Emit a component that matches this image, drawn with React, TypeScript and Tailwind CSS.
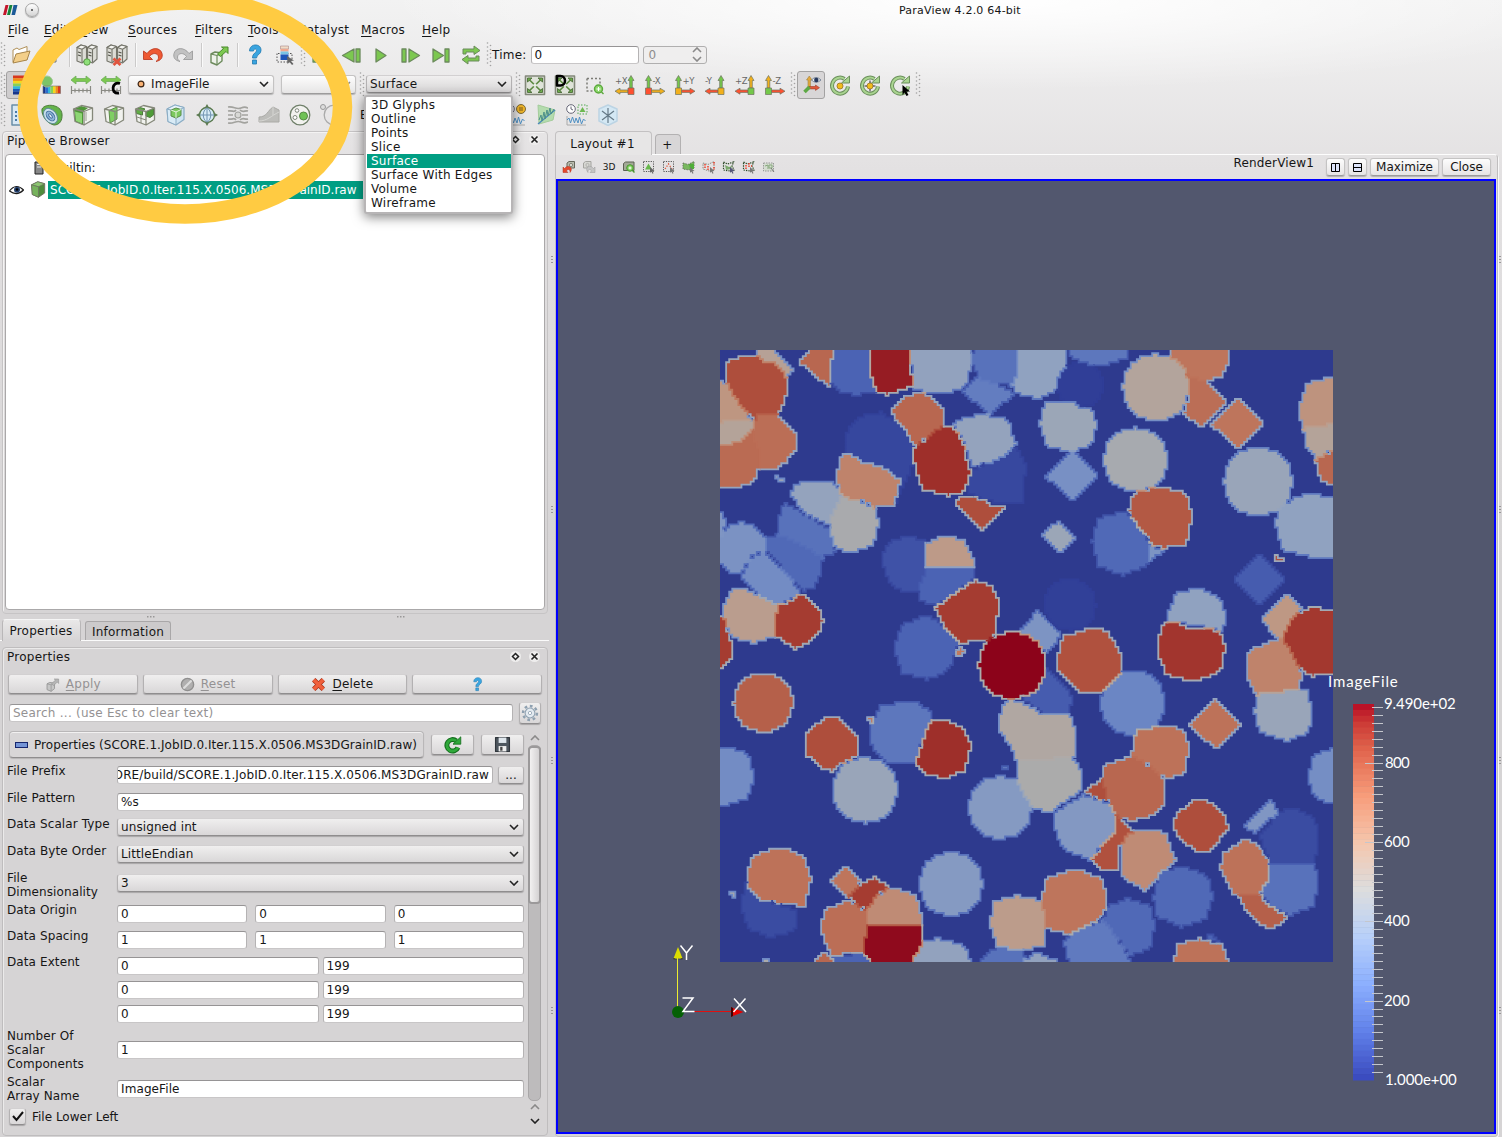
import React, { useMemo } from "react";

/* ------------------------------------------------------------------ */
/* Grain map                                                           */
/* ------------------------------------------------------------------ */

const STOPS: number[][] = [
  [0, 59, 76, 192], [0.125, 98, 130, 234], [0.25, 141, 176, 254], [0.375, 184, 208, 249], [0.5, 221, 221, 221],
  [0.625, 245, 198, 173], [0.75, 247, 156, 122], [0.875, 224, 98, 75], [0.94, 204, 60, 54], [1, 180, 4, 34],
];

function coolWarm(v: number, shade: number) {
  const t = Math.max(0, Math.min(0.9999, v));
  let i = 0;
  while (STOPS[i + 1][0] <= t) i++;
  const f = (t - STOPS[i][0]) / (STOPS[i + 1][0] - STOPS[i][0]);
  const c = [1, 2, 3].map((k) => Math.round((STOPS[i][k] * (1 - f) + STOPS[i + 1][k] * f) * shade));
  return `rgb(${c[0]},${c[1]},${c[2]})`;
}

type Grain = [number, string];

/* Grains per quadrant, painted in order; three units per screen pixel. */
const NW: Grain[] = [
  [0.035, "410,240 430,215 500,203 560,240 600,280 600,330 580,390 540,480 460,400 390,330 395,270"],
  [0.57, "125,15 180,15 235,72 210,100 150,80 120,35"],
  [0.87, "38,50 70,38 100,30 130,38 160,55 180,55 208,85 215,100 215,145 195,203 165,208 115,225 60,160 32,100"],
  [0.64, "15,103 40,120 60,155 108,225 80,230 15,235"],
  [0.56, "15,235 50,222 115,228 115,250 110,270 70,292 15,305"],
  [0.79, "15,305 70,292 115,255 130,300 132,370 120,400 100,418 50,432 15,428"],
  [0.78, "115,232 130,212 190,212 215,240 243,268 243,310 215,350 190,370 132,370 130,310 112,270"],
  [0.5, "178,398 190,388 195,398 208,402 195,415 190,408"],
  [0.8, "290,15 352,15 352,60 345,130 250,50"],
  [0.12, "352,15 465,15 470,90 485,138 425,152 370,138 346,115 350,60"],
  [0.965, "465,15 585,15 592,125 515,150 485,140 470,95"],
  [0.39, "588,15 770,15 775,60 760,90 755,120 735,135 670,147 600,135 592,120"],
  [0.17, "775,15 912,15 905,90 890,125 860,115 830,112 790,100 785,80 770,60"],
  [0.21, "740,140 785,100 830,112 900,145 825,210"],
  [0.8, "528,200 570,155 610,142 640,150 685,192 690,235 660,262 640,275 600,305 575,260 545,230"],
  [0.4, "715,240 740,220 800,207 880,225 895,280 905,300 850,345 770,368 745,290"],
  [0.94, "600,305 622,290 655,265 685,240 715,245 745,290 750,330 768,380 750,440 700,452 620,432 605,380 595,340"],
  [0.04, "768,375 850,345 905,305 932,360 925,470 860,475 800,465 755,440"],
  [0.87, "722,475 745,453 800,463 828,480 868,488 800,555"],
  [0.4, "225,450 240,420 280,408 350,410 362,420 385,455 350,510 345,545 270,505"],
  [0.71, "380,325 405,325 440,352 500,365 555,405 550,440 535,480 480,490 450,470 400,462 380,450 362,400"],
  [0.49, "350,510 380,455 440,470 480,490 492,530 475,600 400,628 360,605 345,570"],
  [0.17, "190,520 210,472 270,510 345,555 362,625 320,638 240,590 188,572"],
  [0.14, "150,580 190,570 240,590 325,640 315,690 300,730 262,740 200,670 155,615"],
  [0.32, "15,490 30,520 30,548 15,585"],
  [0.3, "15,580 40,545 80,532 115,540 155,585 150,620 115,630 75,690 50,690 15,655"],
  [0.27, "95,660 115,632 150,620 200,670 260,745 190,782 130,755 75,700"],
  [0.6, "30,770 50,738 80,730 120,750 190,785 180,875 120,895 50,880 22,805"],
  [0.91, "187,785 225,770 262,745 318,800 324,828 315,860 270,900 240,912 180,875"],
  [0.91, "15,805 30,830 45,880 50,900 48,940 15,980"],
  [0.07, "500,640 520,595 580,573 632,590 635,680 610,745 560,740 520,710"],
  [0.62, "632,600 670,578 705,575 750,590 775,640 778,672 635,672"],
  [0.12, "635,672 778,668 780,700 720,745 660,785 615,765 612,730 630,690"],
  [0.12, "540,900 560,840 635,812 665,825 730,895 710,960 690,985 635,1005 560,985 540,925"],
  [0.91, "660,790 720,745 780,705 830,725 850,770 845,855 825,885 780,892 735,895 690,850"],
  [0.75, "735,905 750,920 735,940 722,930"],
];

const NE: Grain[] = [
  [0.38, "-5,15 135,15 140,70 130,110 115,135 55,165 25,150 -5,148 -25,125 -10,90"],
  [0.19, "150,15 325,15 322,40 235,65 155,42"],
  [0.01, "c 180,120 68"],
  [0.43, "75,168 155,168 175,185 210,188 232,235 215,300 150,322 80,305 58,240"],
  [0.29, "155,315 232,393 155,470 75,393"],
  [0.43, "115,527 167,578 118,628 65,575"],
  [0.76, "455,15 628,15 622,60 600,100 560,105 515,100 485,75 480,50 455,38"],
  [0.78, "485,75 515,100 560,105 618,172 542,250 492,205 510,150"],
  [0.55, "c 408,128 99"],
  [0.76, "650,157 730,237 652,315 572,237"],
  [0.48, "c 347,345 95"],
  [0.14, "215,590 235,520 320,498 365,560 400,605 390,660 310,692 235,665"],
  [0.31, "388,605 435,612 390,655"],
  [0.84, "340,445 420,425 498,445 518,510 498,602 430,610 400,600 365,560 325,503"],
  [0.38, "820,460 870,445 940,460 940,640 870,637 785,615 768,540 770,500"],
  [0.42, "c 715,410 102"],
  [0.65, "940,95 860,115 835,200 850,250 905,245 940,232"],
  [0.56, "850,250 905,245 940,232 940,315 888,342 860,310"],
  [0.8, "940,315 888,345 890,380 910,412 940,422"],
  [0.87, "765,632 782,640 795,632 790,645 796,658 780,648 770,655"],
  [0.1, "717,628 795,707 717,785 638,707"],
  [0.014, "c 150,780 76"],
  [0.38, "445,800 470,745 535,730 600,760 618,810 608,865 575,850 440,830"],
  [0.925, "430,840 460,832 510,850 575,852 610,870 614,910 608,965 580,990 515,1012 440,990 418,940 415,880"],
  [0.63, "722,825 798,748 850,795 815,820 785,880 775,885"],
  [0.92, "850,795 880,787 940,802 940,985 880,995 845,980 815,925 785,880 815,825"],
  [0.31, "55,795 125,872 80,925 40,890 -5,865"],
  [0.1, "80,970 150,1040 155,1070 145,1105 70,1105 10,1065 20,1000"],
  [0.86, "115,930 130,875 210,852 260,858 305,930 305,985 240,1045 180,1045 115,980"],
  [1, "c -23,963 100"],
];

const SW: Grain[] = [
  [0.82, "c 145,160 88"],
  [0.87, "270,250 345,198 375,205 430,260 430,320 370,345 350,365 315,355 268,310"],
  [0.19, "465,230 500,165 600,157 650,185 645,230 620,280 600,345 520,345 470,290"],
  [0.94, "640,230 655,215 700,213 750,240 768,290 750,365 690,387 630,375 603,340 620,290"],
  [0.42, "c 450,422 97"],
  [0.27, "15,290 80,305 105,330 117,382 100,445 15,475"],
  [0.34, "c 855,475 94"],
  [0.05, "78,770 90,700 135,750 190,765 245,785 240,845 165,865 100,840"],
  [0.77, "95,680 115,620 170,600 215,600 270,625 288,690 268,772 190,762 135,750 97,712"],
  [0.5, "38,725 52,732 60,722 68,738 55,745 45,738"],
  [0.2, "850,345 866,350 880,345 870,365 860,358"],
  [0.76, "345,693 393,648 440,695 400,750"],
  [0.91, "400,745 440,700 480,685 525,712 480,745 455,785"],
  [0.78, "318,825 330,780 400,755 455,785 455,900 440,912 350,918 325,870"],
  [0.68, "455,785 480,745 525,715 600,735 618,790 618,835 455,835"],
  [0.39, "585,936 620,880 670,868 750,890 768,936"],
  [0.99, "458,832 620,832 622,885 590,936 465,936 445,910"],
  [0.12, "350,925 440,912 465,936 350,936"],
  [0.8, "300,936 335,905 352,936"],
  [0.34, "c 708,705 95"],
  [0.75, "455,210 470,203 475,218 465,220"],
  [0.5, "142,936 152,922 165,936"],
];

const SE: Grain[] = [
  [0.42, "710,135 780,125 860,120 878,190 865,250 800,275 720,250 703,190"],
  [0.71, "680,20 690,0 770,-30 785,-35 815,10 845,70 840,115 780,128 710,135 680,85"],
  [0.5, "-10,330 160,325 185,370 180,430 130,460 100,490 40,480 10,430 -8,395"],
  [0.53, "-65,220 -55,175 -30,150 0,155 60,190 148,190 165,240 162,325 -12,332 -30,290 -65,240"],
  [0.24, "c 338,160 97"],
  [0.77, "350,245 430,228 490,240 508,300 490,378 435,388 380,340 335,320 340,270"],
  [0.8, "250,350 335,320 390,350 435,390 430,470 400,500 330,515 280,495 265,455 248,400"],
  [0.87, "195,428 248,383 262,460"],
  [0.33, "100,530 105,490 190,435 265,460 288,500 285,545 210,632 130,600"],
  [0.86, "288,500 315,520 340,545 300,590 295,665 250,665 215,630 285,545"],
  [0.68, "300,600 320,555 375,540 435,550 467,632 375,724 300,680"],
  [0.87, "461,520 475,490 525,450 560,452 618,500 625,540 570,605 535,612 470,560"],
  [0.77, "587,147 665,226 590,303 508,226"],
  [0.28, "940,295 880,320 863,380 880,440 940,468"],
  [0.32, "750,455 778,485 705,555 675,530"],
  [0.05, "720,560 780,485 830,480 885,510 895,560 885,645 750,645"],
  [0.17, "750,645 885,645 897,700 880,770 810,800 750,770 720,725"],
  [0.77, "612,610 670,572 710,580 748,640 745,690 720,735 640,735 600,660"],
  [0.82, "655,740 720,732 740,765 805,808 755,838 720,828 675,780"],
  [0.14, "400,740 420,670 490,650 565,680 580,740 560,810 485,835 405,800"],
  [0.14, "265,770 320,748 390,770 405,830 390,900 330,920 250,810"],
  [0.2, "150,855 250,810 300,880 335,940 145,940 132,880"],
  [0.17, "-130,940 -65,890 10,900 20,940"],
  [0.61, "-90,830 -80,760 -10,738 65,755 75,800 70,890 0,905 -70,890"],
  [0.76, "75,690 165,658 250,690 260,770 240,810 150,855 80,840 65,760"],
  [0.77, "460,940 475,885 540,868 610,890 625,940"],
  [0.12, "570,850 610,888 560,870"],
  [0.39, "5,940 50,908 120,940"],
];

const N = 200;
const UNIT = 1839 / N;

function rasterise() {
  const cells = new Float32Array(N * N);
  const paint = (list: Grain[], ox: number, oy: number) => {
    for (const [value, shape] of list) {
      let pts: number[][];
      if (shape[0] === "c") {
        const [, centre, radius] = shape.split(" ");
        const [cx, cy] = centre.split(",").map(Number);
        const r = Number(radius);
        pts = Array.from({ length: 24 }, (_, i) => {
          const a = (i / 24) * Math.PI * 2;
          const k = i % 6 === 3 ? 1.03 : i % 6 === 0 ? 1.025 : i % 2 === 0 ? 1.03 : 0.995;
          return [cx + Math.cos(a) * r * k, cy + Math.sin(a) * r * k];
        });
      } else {
        pts = shape.split(" ").map((p) => p.split(",").map(Number));
      }
      pts = pts.map(([x, y]) => [(x + ox) / UNIT, (y + oy) / UNIT]);
      const xs = pts.map((p) => p[0]);
      const ys = pts.map((p) => p[1]);
      const x1 = Math.min(N - 1, Math.ceil(Math.max(...xs)));
      const y1 = Math.min(N - 1, Math.ceil(Math.max(...ys)));
      for (let y = Math.max(0, Math.floor(Math.min(...ys))); y <= y1; y++)
        for (let x = Math.max(0, Math.floor(Math.min(...xs))); x <= x1; x++) {
          const px = x + 0.5;
          const py = y + 0.5;
          let inside = false;
          for (let i = 0, j = pts.length - 1; i < pts.length; j = i++) {
            const [ax, ay] = pts[i];
            const [bx, by] = pts[j];
            if (ay > py !== by > py && px < ((bx - ax) * (py - ay)) / (by - ay) + ax) inside = !inside;
          }
          if (inside) cells[y * N + x] = value;
        }
    }
  };
  paint(NW, -15, -15);
  paint(SW, -15, 900);
  paint(SE, 900, 900);
  paint(NE, 900, -15);

  const fills = new Map<number, string>();
  const edges = new Map<number, string>();
  const key = (v: number) => Math.round(v * 1000) / 1000;
  const add = (m: Map<number, string>, v: number, d: string) => m.set(key(v), (m.get(key(v)) || "") + d);
  for (let y = 0; y < N; y++) {
    let start = 0;
    for (let x = 1; x <= N; x++) {
      const v = cells[y * N + start];
      if (x === N || cells[y * N + x] !== v) {
        if (v > 0) add(fills, v, `M${start} ${y}h${x - start}v1h${start - x}z`);
        if (x < N) add(edges, (v + cells[y * N + x]) / 2, `M${x} ${y}v1`);
        start = x;
      }
    }
    if (y > 0)
      for (let x = 0; x < N; x++) {
        const a = cells[y * N + x];
        const b = cells[(y - 1) * N + x];
        if (a !== b) add(edges, (a + b) / 2, `M${x} ${y}h1`);
      }
  }
  return { fills: [...fills], edges: [...edges] };
}

function GrainMap() {
  const { fills, edges } = useMemo(rasterise, []);
  return (
    <svg width="613" height="612" viewBox="0 0 200 200" preserveAspectRatio="none" className="block">
      <rect width="200" height="200" fill="#2e3a8e" />
      {fills.map(([v, d]) => (
        <path key={v} d={d} fill={coolWarm(v, 0.775)} shapeRendering="crispEdges" />
      ))}
      {edges.map(([v, d]) => (
        <path key={v} d={d} stroke={coolWarm(v, 0.78)} strokeWidth="0.6" strokeLinecap="square" />
      ))}
    </svg>
  );
}

function ScalarBar() {
  const bands = 64;
  const h = 376 / bands;
  return (
    <svg width="140" height="420" viewBox="1325 670 140 420" className="block overflow-visible font-['Lato']" fill="#fff">
      {Array.from({ length: bands }, (_, i) => (
        <rect key={i} x="1353" y={704 + i * h} width="21" height={h + 0.5} fill={coolWarm(0.985 * (1 - i / (bands - 1)), 1)} />
      ))}
      {Array.from({ length: 47 }, (_, i) => {
        const major = i === 7 || i === 17 || i === 27 || i === 37;
        return <rect key={i} x={major ? 1365 : 1372} y={Math.round(707 + i * 7.935)} width={major ? 18 : 11} height="1" fill="#c4c6cc" />;
      })}
      <text x="1328" y="687" fontSize="15" textLength="70">ImageFile</text>
      <text x="1384" y="709" fontSize="15" textLength="72">9.490e+02</text>
      <text x="1385" y="768" fontSize="15" textLength="25">800</text>
      <text x="1384" y="847" fontSize="15" textLength="26">600</text>
      <text x="1384" y="926" fontSize="15" textLength="26">400</text>
      <text x="1384" y="1006" fontSize="15" textLength="26">200</text>
      <text x="1385" y="1085" fontSize="15" textLength="72">1.000e+00</text>
    </svg>
  );
}

function Axes() {
  return (
    <svg width="80" height="80" viewBox="670 940 80 80" className="block">
      <path d="M677.5 1012V958" stroke="#ecec30" />
      <path d="M680 1011.500H731" stroke="#e01010" />
      <path d="M678 947l4.500 11.500h-9z" fill="#dcdc00" />
      <path d="M673.500 958q4.500 2.500 9 0v1.300h-9z" fill="#222200" />
      <path d="M743.500 1012l-12.500 4.800v-9.600z" fill="#e80000" />
      <path d="M731 1007v10l2-1v-8z" fill="#400" />
      <circle cx="678" cy="1012" r="6" fill="#056005" />
      <g stroke="#fff" strokeWidth="1.500" fill="none">
        <path d="M680.500 945.500l6 7.500 6-7.500M686.500 953v7" />
        <path d="M682.500 998h10.500l-10 13.500h11.500" />
        <path d="M734 998.500l12 13.500M745.500 998.500l-12 13.500" />
      </g>
    </svg>
  );
}

/* ------------------------------------------------------------------ */
/* Icons                                                               */
/* ------------------------------------------------------------------ */

type IconProps = { children: React.ReactNode; s?: number };
const Svg = ({ children, s = 22 }: IconProps) => (
  <svg width={s} height={s} viewBox="0 0 22 22" fill="none" strokeLinejoin="round" className="block shrink-0">
    {children}
  </svg>
);

const OUT = "#6d7260";
const GREEN = "#7cc850";

const Cube = ({ front = "#8ed07a", top = "#e9f2e4", side = "#5aa044", stroke = OUT }) => (
  <>
    <path d="M2 5l8-4 9 2.500v12L11 21l-8-3.500z" fill={side} stroke={stroke} strokeWidth="1.200" />
    <path d="M2 5l8-4 9 2.500-8 4z" fill={top} stroke={stroke} />
    <path d="M2 5l9 2.500V21l-8-3.500z" fill={front} stroke={stroke} />
  </>
);

const Folder = () => (
  <Svg>
    <path d="M3 18V6l4-2 2 1.500 8-3v13z" fill="#fff" stroke="#b09058" />
    <path d="M3 19L6 10l14-3-3 9z" fill="#f3cf8a" stroke="#a8864c" />
  </Svg>
);
const Disk = () => (
  <Svg><path d="M4 3h12v15H4z" fill="#ccc" stroke="#777" /><path d="M7 3h6v6H7z" fill="#eee" /></Svg>
);
const Server = ({ off = false }) => (
  <Svg>
    {[1, 11.5].map((x) => (
      <g key={x} strokeWidth="1.100">
        <path d={`M${x} 3.500l4-2.500 5.500 1.500v12.500l-4.500 4-5-2z`} fill="#dcdcd6" stroke="#74746a" />
        <path d={`M${x} 3.500l5 1.700 4.500-2.700-5.500-1.500z`} fill="#f6f6f2" stroke="#74746a" />
        <path d={`M${x + 5} 5.200v13`} stroke="#74746a" />
        <path d={`M${x + 1} 8l3 1M${x + 1} 11l3 1`} stroke="#55554c" />
      </g>
    ))}
    {off ? <path d="M7.500 14.500l7 6.500M14.500 14.500l-7 6.500" stroke="#e0553f" strokeWidth="2.800" /> : <circle cx="11" cy="18" r="3.200" fill="#8fe07a" stroke="#5b9d48" />}
  </Svg>
);
const Undo = ({ redo = false }) => (
  <Svg>
    <path
      transform={redo ? "translate(22 0) scale(-1 1)" : undefined}
      d="M1.500 7v8.500h9l-3-3c2.500-4 8.500-4 9 .5.200 2-1 3.500-2.500 4.500 5-1 7-4 6-8C18.500 3.500 10 2.500 5 9.500z"
      fill={redo ? "#c2c2c2" : "#ee5a34"}
      stroke={redo ? "#969696" : "#b8321a"}
      strokeWidth=".8"
    />
  </Svg>
);
const CubeArrow = ({ grey = false, s = 22 }) => (
  <Svg s={s}>
    <path d="M3 10l4-2 7 1v8l-5 4-6-2.500z" fill={grey ? "#c6c6c6" : "#eef2ea"} stroke={grey ? "#999" : "#6c8a5c"} strokeWidth="1.400" />
    <path d="M3 10l6 1.500V21M9 11.500l5-2.500" stroke={grey ? "#999" : "#6c8a5c"} strokeWidth="1.200" />
    <path d="M9.500 10l6-5.500-2-1.500h6.500v6.500l-2-2-5.500 5z" fill={grey ? "#b5b5b5" : GREEN} stroke={grey ? "#999" : "#4a8a2c"} />
  </Svg>
);
const Question = ({ s = 22 }) => (
  <Svg s={s}>
    <path d="M5.500 7c0-8 12-8 11.500-.5 0 4-4.500 4-4.500 7.500h-4c0-5 4-5 4-7.500 0-2-3-2-3 .5z" fill="#3aa5e0" stroke="#227ab0" strokeWidth=".8" />
    <path d="M8.500 16h4v4h-4z" fill="#3aa5e0" stroke="#227ab0" strokeWidth=".8" />
  </Svg>
);
const Palette = () => (
  <Svg>
    <path d="M3 9.500v8.500h13M4 9.500h14v6" stroke="#555" strokeDasharray="1.500 1.500" />
    <path d="M6.500 2h8v3h-8z" fill="#f0dcc8" stroke="#a88" strokeWidth=".6" /><path d="M6.500 5h8v2.500h-8z" fill="#f0a890" /><path d="M6.500 7.500h8v3h-8z" fill="#7ac4e4" /><path d="M6.500 10.500h8V16h-8z" fill="#1f55b8" />
    <path d="M13 12l7 4.500-3 .5 2.500 3-1.500 1-2.500-3-2 2z" fill="#666" />
  </Svg>
);
const Transport = ({ d }: { d: string }) => (
  <Svg><path d={d} fill={GREEN} stroke="#6b8a5c" strokeWidth="1.300" /></Svg>
);
const Loop = () => (
  <Svg>
    <path d="M3 10V5h11V2l6 4.500-6 4V8H6v2zM19 12v5H8v3l-6-4.500 6-4V14h8v-2z" fill={GREEN} stroke="#6b8a5c" />
  </Svg>
);
const ColorBar = () => (
  <Svg>
    {["#d8381e", "#f08a1c", "#f2d81e", "#86d05a", "#35b6d8", "#1f58b8", "#17358a"].map((c, i) => (
      <rect key={c} x={3} y={1.5 + i * 2.7} width="16" height="2.800" fill={c} />
    ))}
  </Svg>
);
const EditColor = () => (
  <Svg>
    {["#17358a", "#2a6ed0", "#35b6d8", "#86d05a", "#f2d81e", "#f08a1c", "#d8381e"].map((c, i) => (
      <rect key={c} x={3 + i * 2.5} y="12" width="2.600" height="7.500" fill={c} />
    ))}
    <circle cx="7" cy="7.500" r="5.500" fill="#7cc468" stroke="#a5c898" />
    <path d="M3 12v7.500h17.500V12z" stroke="#777" strokeWidth=".6" />
  </Svg>
);
const Rescale = ({ custom = false }) => (
  <Svg>
    <path d="M1 6l5-4v2.500h10V2l5 4-5 4V7.500H6V10z" fill={GREEN} stroke="#6fae5a" strokeWidth=".8" />
    <path d="M1.500 12v8M1.500 16.500h19M20.500 12v8M5 14.500v4M9 14.500v4M13 14.500v4M17 14.500v4" stroke="#8a8a84" strokeWidth="1.200" />
    {custom && <path d="M20 9.500c-8-3-10 11-1 9.500" stroke="#000" strokeWidth="2.800" />}
  </Svg>
);
const Fit = ({ data = false }) => (
  <Svg>
    <path d="M1.500 2h19v18.500h-19z" fill="#dfe3d9" stroke="#83887a" strokeWidth="1.600" />
    <path d="M4.500 5l13 12.500M17.500 5l-13 12.500" stroke="#5d8a42" strokeWidth="1.700" />
    <path d="M3.500 8V4H8zM14 4h4.500v4zM3.500 14.500v4H8zM14 18.500h4.500v-4z" fill="#6fae4c" stroke="#4c6c3a" strokeWidth=".9" />
    <circle cx="11" cy="11.200" r="1.700" fill="#e8ece4" />
    {data && <path d="M3 2h3.500c6 0 6 9.500 0 9.500H3z" stroke="#000" strokeWidth="2.500" />}
  </Svg>
);
const ZoomBox = () => (
  <Svg>
    <path d="M3 4.500h13v7M3 4.500V17h6" stroke="#7b7b76" strokeWidth="1.500" strokeDasharray="2 2" />
    <circle cx="14.500" cy="15" r="4" fill="#8ed86e" stroke="#5ba83c" strokeWidth="1.400" />
    <path d="M12.500 15h4M14.500 13v4" stroke="#fff" /><path d="M17.500 18l2 2" stroke="#5ba83c" strokeWidth="1.500" />
  </Svg>
);
const View = ({ l, left = false, up, side, box }: { l: string; left?: boolean; up: string; side: string; box: string }) => {
  const bx = left ? 14 : 1.5;
  return (
    <Svg>
      <path d={`M${bx + 1.7} 14V6.500h-1.700l3-5 3 5h-1.700V14z`} fill={up} stroke="#6d7260" strokeWidth=".7" />
      <path d={left ? "M14 16H6v-1.800l-5 3 5 3v-1.800h8z" : "M7.500 16h8.500v-1.800l5 3-5 3v-1.800H7.500z"} fill={side} stroke="#6d7260" strokeWidth=".7" />
      <rect x={bx} y="14" width="6" height="6.500" fill={box} stroke="#6d7260" strokeWidth=".7" />
      <text x={left ? 1 : 8.5} y="10" fontSize="8.500" letterSpacing="-.4" fill="#666" className="font-['DejaVu_Sans']">{l}</text>
    </Svg>
  );
};
const AxesEye = () => (
  <Svg>
    <path d="M8 14V6H6.500L9.300 2l2.700 4h-1.600v8z" fill="#e2a83c" stroke="#a0803c" strokeWidth=".6" />
    <path d="M9 12.500h6.500V11l4 2.700-4 2.700v-1.500H9z" fill="#e0583a" stroke="#a03c28" strokeWidth=".6" />
    <path d="M9.500 13l-5 5" stroke="#5da845" strokeWidth="3.500" />
    <path d="M11.500 6q4.500-5 9.500 0-5 4.500-9.500 0z" fill="#e8ecf2" stroke="#6c7c90" strokeWidth=".9" />
    <circle cx="16.300" cy="6" r="2.200" fill="#26385c" />
  </Svg>
);
const Rotate = ({ mode }: { mode: number }) => (
  <Svg>
    <path d="M19 12.500a8 8 0 1 1-3.500-7.500" stroke="#6b8f5c" strokeWidth="4" />
    <path d="M19 12.500a8 8 0 1 1-3.500-7.500" stroke="#a9d490" strokeWidth="2" />
    <path d="M12.500 9h8V2z" fill="#a9d490" stroke="#6b8f5c" />
    {mode < 2 && <circle cx="11" cy="12" r="3" fill="#f2bd1c" stroke="#a8842c" />}
    {mode === 1 && <path d="M11 6.500v2.500M11 15v2.500M5.500 12h2.500M14 12h2.500" stroke="#333" />}
    {mode === 2 && <path d="M13.500 11l7.500 6.500h-3.500l2 3.500-2 1-2-3.500-2 2.500z" fill="#000" />}
  </Svg>
);
const Calculator = () => (
  <Svg>
    <path d="M2 1h18v20H2z" fill="#d8e8f4" stroke="#6a8ea8" strokeWidth="1.500" />
    <path d="M5 8h12M5 12h12M5 16h12" stroke="#4a7ca8" strokeWidth="2" strokeDasharray="2 2" />
  </Svg>
);
const Contour = () => (
  <Svg>
    <path d="M1 5C4-1 20 0 21 10c.5 6-2 11-8 11C7 20 0 12 1 5z" fill="#63b34a" stroke="#4e7c3c" />
    <ellipse cx="9.500" cy="12" rx="6" ry="8.500" transform="rotate(-38 9.500 12)" fill="#cfe3ee" stroke="#5f8c94" />
    <ellipse cx="9.500" cy="12" rx="3.500" ry="5.500" transform="rotate(-38 9.500 12)" fill="#8fb6d8" stroke="#446fa0" />
    <ellipse cx="9.500" cy="12" rx="1.200" ry="2.500" transform="rotate(-38 9.500 12)" fill="#e6f2f8" stroke="#446fa0" />
  </Svg>
);
const Frame = () => <path d="M1.500 5l8-3.500L20.500 4v12L12 21l-9-3.500zM1.500 5L12 7.500 20.500 4M12 7.500V21" stroke="#85887a" strokeWidth="1.300" />;
const Clip = () => (
  <Svg><path d="M1.500 5l8-3.500L20.500 4v12L12 21l-9-3.500z" fill="#f1f2ee" /><path d="M2 5l7-3 7 2-5 3.500V21l-8-3.500z" fill="#4f9638" /><path d="M3 7.500l7 2v10l-6-2.500z" fill="#8ed674" /><path d="M14 8v9" stroke="#9a9d90" /><Frame /></Svg>
);
const Slice = () => (
  <Svg><path d="M1.500 5l8-3.500L20.500 4v12L12 21l-9-3.500z" fill="#f1f2ee" /><path d="M6 6.500l8-3.500v12l-7 4z" fill="#7fcf62" stroke="#5d8a48" /><Frame /></Svg>
);
const Threshold = () => (
  <Svg><path d="M1.500 5l8-3.500L20.500 4v12L12 21l-9-3.500z" fill="#f1f2ee" /><path d="M2 5.500l4-2 5 1.500-2.500 2V11L2.500 9.500z" fill="#5fae44" stroke="#4d7c3c" /><path d="M12 8l7.500-3.500V11L16 13.500l-4-1.500z" fill="#4f9c38" stroke="#4d7c3c" /><Frame /><path d="M7 11v8M3 13l9 3" stroke="#85887a" /></Svg>
);
const Subset = () => (
  <Svg><Cube front="#d9ebf6" top="#e9f4fa" side="#cfe4f2" stroke="#8aacc4" /><path d="M6 6l5-2 5 1.500v6L11 14l-5-2z" fill="#7cc95e" stroke="#5a8c48" /><path d="M6 6l5 2v6M11 8l5-2.500" stroke="#e6f4de" /></Svg>
);
const Glyph = () => (
  <Svg>
    <circle cx="11" cy="11" r="7.500" fill="#d7ebf6" stroke="#58784c" strokeWidth="1.300" />
    <path d="M3.500 11h15M11 3.500v15M11 3.500c-5 4-5 11 0 15M11 3.500c5 4 5 11 0 15" stroke="#6f93b0" />
    <path d="M11 0l2 3.500H9zM11 22l2-3.500H9zM0 11l3.500-2v4zM22 11l-3.500-2v4z" fill="#5b7a50" />
  </Svg>
);
const Stream = () => (
  <Svg>
    <g stroke="#a2a29e" strokeWidth="1.700">
      <path d="M1 3c6-1 8 3 13 1s6 0 7 0M1 7c5-1 6 2 8-1M13 6c3 3 5 0 8 1M1 11h5M15 11h6M1 15c5 1 6-2 8 1M13 16c3-3 5 0 8-1M1 19c6 1 8-3 13-1s6 0 7 0" />
      <circle cx="11" cy="11" r="3" fill="#d8d8d5" strokeWidth="1.200" />
    </g>
  </Svg>
);
const Warp = () => (
  <Svg><path d="M1 13c8 0 9-7 14-10l6 3v12H1z" fill="#bdbdba" stroke="#aaaaa6" /><path d="M1 17c8 0 12-5 20-9M15 3v8" stroke="#d6d6d3" /></Svg>
);
const Group = ({ grey = false }) => (
  <Svg>
    <circle cx={grey ? 14 : 11} cy="11" r="9.800" fill={grey ? "none" : "#f2f2ef"} stroke={grey ? "#aaa" : "#70806a"} strokeWidth="1.300" />
    <circle cx={grey ? 3 : 14.5} cy={grey ? 3 : 12} r={grey ? 2.5 : 4} fill={grey ? "#ddd" : "#6fc255"} stroke={grey ? "#999" : "#568a44"} />
    {!grey && <><circle cx="8" cy="6.500" r="1.800" fill="#fff" stroke="#80887c" /><circle cx="6" cy="13.500" r="2" fill="#fff" stroke="#80887c" /></>}
  </Svg>
);
const wave = "M1 16l2-2 1.500 5 2-6 2 6 1.500-5 2 5 1.500-6 2 7 2-5 2 2";
const PlotTime = ({ sel = false }) => (
  <Svg>
    <circle cx="5" cy="5" r="4.300" fill="#fff" stroke="#667" /><path d="M5 2.500V5l2 1" stroke="#667" />
    {sel ? <path d="M12 1h9v9h-9z" stroke="#5a5" strokeDasharray="1.500 1.500" /> : <circle cx="16" cy="5" r="4.500" fill="#f0b62a" stroke="#7c6a3a" />}
    {sel && <path d="M16.500 3l3 5h-6z" fill="#6cb850" />}
    {!sel && <path d="M14 4h4M14 6h4" stroke="#7c5a1a" />}
    <path d="M1 12v9h19" stroke="#aaa" /><path d={wave} stroke="#4f90c4" />
  </Svg>
);
const PlotLine = () => (
  <Svg><path d="M3 1l17 5-2 10-14 4z" fill="#b4dcae" stroke="#a4cc9c" /><path d="M3 20L20 6" stroke="#4a86bc" strokeWidth="1.300" /><path d="M4 16l2-5 1 6 2-9 1 7 2-9 1 6 2-8 1 6 3-5" stroke="#4b8f88" /></Svg>
);
const Probe = () => (
  <Svg><path d="M2 5l9-4 9 4v12l-9 4.500L2 17z" fill="#d4e8f4" stroke="#bcd4e4" strokeWidth="1.500" /><path d="M11 4v15M5 7l12 9M17 7L5 16" stroke="#667a88" strokeWidth="1.200" /></Svg>
);
const Eye = () => (
  <svg width="15" height="10" viewBox="0 0 15 10" className="block" fill="none">
    <path d="M.5 6Q7-2.500 14.500 5 8 11.500.5 6z" fill="#fff" stroke="#1c1c1c" strokeWidth="1.200" /><circle cx="8" cy="4.800" r="3" fill="#27436f" /><circle cx="8" cy="4.500" r="1.300" fill="#000" />
  </svg>
);

/* camera and selection icons of the view toolbar */
const pointer = "M8 7l4.500 4-2 .2 1 2-1 .5-1-2-1.500 1z";
const Sel = ({ kind }: { kind: string }) => (
  <svg width="14" height="14" viewBox="0 0 14 14" fill="none" className="block shrink-0">
    {kind === "undo" && <><path d="M5 3l2-1.500h5.500V8H5z" fill="#b9bcae" stroke="#66685c" /><circle cx="9" cy="5" r="1.600" fill="#e4e4dc" stroke="#66685c" strokeWidth=".7" /><path d="M1 7v5.500h5L4.500 11c1-2.500 4-2 3.500 1.500 4-5-2-8.500-5.500-4z" fill="#e5492e" stroke="#b03018" strokeWidth=".5" /></>}
    {kind === "redo" && <><path d="M1.500 3l2-1.500H9V8H1.500z" fill="#d6d6d2" stroke="#a4a4a0" /><circle cx="5.500" cy="5" r="1.600" stroke="#a4a4a0" strokeWidth=".7" /><path d="M13 7v5.500H8L9.500 11C8.500 8.500 5.500 9 6 12.500 2 7.500 8 4 11.500 8.500z" fill="#c4c4c4" stroke="#999" strokeWidth=".5" /></>}
    {kind === "zoom" && <><path d="M1.500 3.500l2-1.500H12v8.500H1.500z" fill="#a4aa98" stroke="#5c6052" /><circle cx="8" cy="8" r="3.300" fill="#7ed05c" stroke="#4b9830" /><path d="M6.500 8h3M8 6.500v3" stroke="#fff" /><path d="M10.500 10.500l2 2" stroke="#4b9830" strokeWidth="1.500" /></>}
    {kind === "cells" && <><path d="M1.500 1.500h10v10h-10z" stroke="#555" strokeDasharray="1.200 1.200" /><path d="M6.500 3.500l3.500 6H3z" fill="#67b84c" /><path d={pointer} fill="#666" /></>}
    {kind === "points" && <><path d="M1.500 1.500h10v10h-10z" stroke="#555" strokeDasharray="1.200 1.200" /><path d="M3 9l3.500-5L10 9" stroke="#e2583e" strokeWidth="1.300" strokeDasharray="1.300 1.500" /><path d={pointer} fill="#777" /></>}
    {kind === "frustumCells" && <><path d="M1 3l5 1.500 6-3V8L7 10 1 9z" fill="#78b85e" stroke="#66785c" strokeDasharray="1.500 1" /><path d="M7 4h5v5H8z" fill="#4fae38" /><path d={pointer} fill="#777" /></>}
    {kind === "frustumPoints" && <><path d="M1 3l5 1.500 6-3V10L7 11 1 9z" stroke="#8a8a80" strokeDasharray="1.500 1" /><path d="M3 4v5M6 6v4M12 2v3M12 7v3" stroke="#f0402c" strokeWidth="1.500" strokeDasharray="1.500 1" /><path d={pointer} fill="#777" /></>}
    {kind === "polyCells" && <><path d="M1.500 2l4 2 6-2-1.500 4 2 4-4 1-6.500-1z" stroke="#2e4a28" strokeWidth="1.200" strokeDasharray="1.400 1" /><path d="M3 5l4 2 3-1-1 3-5 1z" fill="#7aa86c" /><path d={pointer} fill="#557" /></>}
    {kind === "polyPoints" && <><path d="M1.500 2l4 2 6-2-1.500 4 2 4-4 1-6.500-1z" stroke="#2e4a28" strokeWidth="1.200" strokeDasharray="1.400 1" /><path d="M4 5v4M7 3v5M9 6h1" stroke="#f0402c" strokeWidth="1.500" strokeDasharray="1.500 1" /><path d={pointer} fill="#777" /></>}
    {kind === "blocks" && <><path d="M1.500 3h10v8h-10z" fill="#d4dcd0" stroke="#999" strokeDasharray="1.500 1" /><path d="M3 6l3-1v4M7 5h3v3H7z" stroke="#86a87c" /><path d="M9 8l3 4" stroke="#777" /></>}
  </svg>
);

/* ------------------------------------------------------------------ */
/* Widgets                                                             */
/* ------------------------------------------------------------------ */

const Cell = ({ children, w = "w-[30px]" }: { children?: React.ReactNode; w?: string }) => (
  <div className={`flex h-[30px] shrink-0 items-center justify-center ${w}`}>{children}</div>
);
const Sep = () => (
  <div className="flex h-[30px] w-1.5 shrink-0 justify-center py-[3px]">
    <div className="w-px bg-[#cbcaca] shadow-[1px_0_0_#fafafa]" />
  </div>
);
const Handle = () => (
  <svg width="6" height="28" viewBox="0 0 6 28" className="block shrink-0">
    {[2, 6, 10, 14, 18, 22].map((y) => (
      <g key={y} fill="#a2a1a1"><circle cx="1.500" cy={y} r=".8" /><circle cx="4.500" cy={y + 2.5} r=".8" /></g>
    ))}
  </svg>
);
const Chevron = ({ up = false, light = false }) => (
  <svg width="10" height="6" viewBox="0 0 10 6" className="block shrink-0" fill="none">
    <path d={up ? "M1 5l4-4 4 4" : "M1 1l4 4 4-4"} stroke={light ? "#8a8989" : "#222"} strokeWidth="1.600" />
  </svg>
);

const raised = "rounded-[3px] border border-[#b3b1b2] border-t-[#d2d0d1] border-b-[#8f8d8e] bg-gradient-to-b from-[#f0efef] to-[#d9d7d8] shadow-[0_1px_1px_rgba(0,0,0,.22)]";
const raisedLight = "rounded-[3px] border border-[#c4c3c3] border-b-[#9c9b9b] bg-gradient-to-b from-[#fdfdfd] to-[#e6e5e5] shadow-[0_1px_1px_rgba(0,0,0,.22)]";
const sunken = "rounded-[3px] border border-[#b5b3b4] border-t-[#969495] border-b-[#c8c6c7] bg-white";

const Field = ({ v, w = "flex-1" }: { v: string; w?: string }) => (
  <div className={`flex h-[18px] min-w-0 items-center pl-[3px] ${sunken} ${w}`}>{v}</div>
);
const Combo = ({ v }: { v: string }) => (
  <div className={`flex h-[18px] flex-1 items-center justify-between pr-1 pl-[3px] ${raised}`}>
    <span>{v}</span>
    <Chevron />
  </div>
);
const Row = ({ label, h, pad = "pt-[2px]", children }: { label: React.ReactNode; h: string; pad?: string; children: React.ReactNode }) => (
  <div className={`flex shrink-0 ${h}`}>
    <div className="w-[110px] shrink-0 whitespace-nowrap leading-[14px] tracking-[0.1px]">{label}</div>
    <div className={`flex min-w-0 flex-1 items-start tracking-[0.1px] ${pad}`}>{children}</div>
  </div>
);
const DockButtons = () => (
  <div className="flex gap-[8px]">
    <div className="flex size-[11px] items-center justify-center rounded-full bg-[#eeeded]">
      <svg width="9" height="9" viewBox="0 0 9 9" fill="none"><path d="M4.500 1.500l3 3-3 3-3-3z" stroke="#222" strokeWidth="1.500" /></svg>
    </div>
    <div className="flex size-[11px] items-center justify-center rounded-full bg-[#eeeded]">
      <svg width="9" height="9" viewBox="0 0 9 9" fill="none"><path d="M1.500 1.500l6 6M7.500 1.500l-6 6" stroke="#222" strokeWidth="1.600" /></svg>
    </div>
  </div>
);
const Grip = ({ vertical = false }) => (
  <svg width={vertical ? 4 : 9} height={vertical ? 9 : 4} viewBox={vertical ? "0 0 4 9" : "0 0 9 4"} className="block shrink-0" fill="#999798">
    {[1, 4, 7].map((p) => (vertical ? <rect key={p} x="1" y={p} width="2" height="1" /> : <rect key={p} x={p} y="1" width="1.500" height="1.500" />))}
  </svg>
);

const MENUS: [string, string][] = [
  ["File", "w-[36px]"], ["Edit", "w-[35px]"], ["View", "w-[49px]"], ["Sources", "w-[67px]"], ["Filters", "w-[53px]"],
  ["Tools", "w-[50px]"], ["Catalyst", "w-[63px]"], ["Macros", "w-[61px]"], ["Help", "w-[40px]"],
];

const Mnemonic = ({ t }: { t: string }) => (
  <span><span className="underline underline-offset-2">{t[0]}</span>{t.slice(1)}</span>
);

const O = "#ff5030";
const Y = "#f2b01c";
const G = "#74c84a";

/* ------------------------------------------------------------------ */
/* Page                                                                */
/* ------------------------------------------------------------------ */

function Toolbars() {
  return (
    <div className="shrink-0">
      <div className="flex h-[30px] items-center pb-px">
        <Handle />
        <Cell><Folder /></Cell><Cell><Disk /></Cell><Sep />
        <Cell><Server /></Cell><Cell><Server off /></Cell><Sep />
        <Cell><Undo /></Cell><Cell><Undo redo /></Cell><Sep />
        <Cell><CubeArrow /></Cell><Sep />
        <Cell><Question /></Cell><Cell><Palette /></Cell><Handle />
        <Cell><Transport d="M3 5h4v13H3zM18 5v13L8 11.500z" /></Cell>
        <Cell><Transport d="M14 5v13L2.500 11.500zM16 5h4v13h-4z" /></Cell>
        <Cell><Transport d="M6 5l10 6.500L6 18z" /></Cell>
        <Cell><Transport d="M2 5h4v13H2zM9 5l10.500 6.500L9 18z" /></Cell>
        <Cell><Transport d="M3 5l10.500 6.500L3 18zM15 5h4v13h-4z" /></Cell>
        <Cell><Loop /></Cell><Handle />
        <span className="w-[38.5px]">Time:</span>
        <Field v="0" w="w-[108px] flex-none" />
        <div className="ml-1 flex h-[18px] w-[64px] items-center justify-between rounded-[3px] border border-[#b0afaf] bg-[#efeeee] pr-1 pl-[5px] text-[#8d8c8c]">
          0
          <span className="flex flex-col gap-[3px]"><Chevron up light /><Chevron light /></span>
        </div>
      </div>
      <div className="flex h-[30px] items-center">
        <Handle />
        <div className="flex h-7 w-[30px] items-center justify-center rounded-[3px] border border-[#a3a2a2] bg-[#cfcdce]"><ColorBar /></div>
        <Cell><EditColor /></Cell><Cell><Rescale /></Cell><Cell><Rescale custom /></Cell>
        <div className={`mb-[2px] ml-0.5 flex h-[19px] w-[146px] items-center pr-1 pl-2 ${raisedLight}`}>
          <svg width="8" height="8" viewBox="0 0 8 8" className="mr-[6px] block"><circle cx="4" cy="4" r="2.900" fill="#f9b274" stroke="#3a2414" strokeWidth="1.200" /></svg>
          <span className="flex-1 tracking-[0.1px]">ImageFile</span><Chevron />
        </div>
        <div className={`mb-[2px] ml-[7px] flex h-[19px] w-[75px] items-center justify-end pr-1 ${raisedLight}`}><Chevron light /></div>
        <div className="w-[3px]" /><Handle />
        <div className={`mr-[3px] mb-[3px] ml-px flex h-[18px] w-[146px] items-center justify-between pr-1 pl-[3px] ${raised}`}><span>Surface</span><Chevron /></div>
        <Handle />
        <div className="-ml-px flex">
          <Cell><Fit /></Cell><Cell><Fit data /></Cell><Cell><ZoomBox /></Cell>
          <Cell><View l="+X" left up={G} side={Y} box={O} /></Cell>
          <Cell><View l="-X" up={G} side={Y} box={O} /></Cell>
          <Cell><View l="+Y" up={G} side={O} box={Y} /></Cell>
          <Cell><View l="-Y" left up={G} side={O} box={Y} /></Cell>
          <Cell><View l="+Z" left up={Y} side={O} box={G} /></Cell>
          <Cell><View l="-Z" up={Y} side={O} box={G} /></Cell>
        </div>
        <Handle />
        <div className="ml-px flex size-7 items-center justify-center rounded-[3px] border border-[#a3a2a2] bg-[#d8d6d7]"><AxesEye /></div>
        <Cell><Rotate mode={0} /></Cell><Cell><Rotate mode={1} /></Cell><Cell><Rotate mode={2} /></Cell><Handle />
      </div>
      <div className="flex h-[31px] items-center pb-[2px]">
        <Handle />
        <Cell><Calculator /></Cell>
        <Cell w="w-[31px]"><Contour /></Cell><Cell w="w-[31px]"><Clip /></Cell><Cell w="w-[31px]"><Slice /></Cell>
        <Cell w="w-[31px]"><Threshold /></Cell><Cell w="w-[31px]"><Subset /></Cell><Cell w="w-[31px]"><Glyph /></Cell>
        <Cell w="w-[31px]"><Stream /></Cell><Cell w="w-[31px]"><Warp /></Cell><Cell w="w-[31px]"><Group /></Cell>
        <Cell w="w-[31px]"><Group grey /></Cell>
        <span className="ml-[14px] w-[140px]">E</span>
        <Cell w="w-[31px]"><PlotTime /></Cell><Cell w="w-[30px]"><PlotLine /></Cell>
        <Cell w="w-[31px]"><PlotTime sel /></Cell><Cell w="w-[31px]"><Probe /></Cell>
      </div>
    </div>
  );
}

function PipelineBrowser() {
  return (
    <div className="ml-0.5 flex h-[483px] w-[546px] flex-col rounded-[4px] border border-[#c6c4c5] shadow-[inset_1px_1px_0_#f4f3f3]">
      <div className="flex h-[22px] items-start justify-between pt-[2px] pr-[7px] pl-1">
        <span className="tracking-[0.2px]">Pipeline Browser</span><DockButtons />
      </div>
      <div className="mr-0.5 ml-0.5 h-[456px] rounded-[4px] border border-[#aaa8a9] bg-white pt-[3px]">
        <div className="flex h-[20px] items-center pl-7">
          <svg width="10" height="14" viewBox="0 0 10 14" className="block"><path d="M1 1h8v12H1z" fill="#888" stroke="#222" /><path d="M3 3.500h4M3 6h4" stroke="#eee" /></svg>
          <span className="ml-[10px] tracking-normal">builtin:</span>
        </div>
        <div className="flex h-[23px] items-center pl-[3px]">
          <Eye />
          <div className="mb-1 ml-[6px] h-5 w-[18px] pt-[3px]"><Svg s={17}><Cube front="#76b35c" top="#8cc670" side="#4f8c3c" /></Svg></div>
          <div className="flex h-[18px] w-[315px] items-center bg-[#009e83] pl-0.5 tracking-[0.02px] text-white">SCORE.1.JobID.0.Iter.115.X.0506.MS3DGrainID.raw</div>
        </div>
      </div>
    </div>
  );
}

function Properties() {
  const btn = `flex h-[20px] flex-1 items-center justify-center ${raised}`;
  return (
    <div className="ml-0.5 flex h-[489px] w-[546px] flex-col rounded-[4px] border border-[#bfbdbe] shadow-[inset_1px_1px_0_#ebeaea]">
      <div className="flex h-[17px] items-center justify-between pr-[7px] pl-1"><span>Properties</span><DockButtons /></div>
      <div className="mt-[9px] mr-[5px] ml-[5px] flex gap-[5px]">
        <div className={`${btn} gap-1.5 text-[#949293]`}><CubeArrow grey s={15} /><Mnemonic t="Apply" /></div>
        <div className={`${btn} gap-1.5 text-[#949293]`}>
          <Svg s={15}><circle cx="11" cy="11" r="9" fill="#b0afaf" stroke="#8f8e8e" strokeWidth="2" /><path d="M5 17L17 5" stroke="#ddd" strokeWidth="3" /></Svg>
          <Mnemonic t="Reset" />
        </div>
        <div className={`${btn} gap-1.5`}>
          <Svg s={15}><path d="M4 4l14 14M18 4L4 18" stroke="#a83018" strokeWidth="7" /><path d="M4 4l14 14M18 4L4 18" stroke="#f0603c" strokeWidth="5" /></Svg>
          <Mnemonic t="Delete" />
        </div>
        <div className={btn}><Question s={15} /></div>
      </div>
      <div className="mt-[8px] mr-[6px] ml-[6px] flex items-center justify-between">
        <div className={`flex h-[18px] w-[504px] items-center pl-[3px] text-[#949293] ${sunken}`}>Search ... (use Esc to clear text)</div>
        <div className={`flex size-[22px] items-center justify-center ${raised}`}>
          <Svg s={18}><circle cx="11" cy="11" r="8.500" stroke="#8ea0b0" strokeWidth="3" strokeDasharray="3.300 3.300" /><circle cx="11" cy="11" r="6" fill="#e3eaf0" stroke="#8ea0b0" strokeWidth="1.300" /><circle cx="11" cy="11" r="2" fill="#fff" stroke="#8ea0b0" /></Svg>
        </div>
      </div>
      <div className="mt-[7px] flex">
        <div className="flex w-[521px] flex-col pl-1">
          <div className="ml-0.5 flex items-center">
            <div className="flex h-[27px] w-[416px] items-center overflow-hidden rounded-[4px] border border-[#b9b7b8] border-b-[#8f8d8e] bg-[#d8d6d7] pl-[5px] shadow-[inset_0_1px_0_#f2f1f1,0_1px_1px_rgba(0,0,0,.15)]">
              <div className="h-[6px] w-[13px] shrink-0 border border-[#16266e] bg-[#7494d6]" />
              <div className="ml-[6px] whitespace-nowrap tracking-[0.06px]">Properties (SCORE.1.JobID.0.Iter.115.X.0506.MS3DGrainID.raw)</div>
            </div>
            <div className={`ml-[7px] flex h-[21px] w-[43px] items-center justify-center ${raised}`}>
              <Svg s={18}><path d="M17 14a7 7 0 1 1-2-8" stroke="#126c1c" strokeWidth="6" /><path d="M17 14a7 7 0 1 1-2-8" stroke="#2fa83a" strokeWidth="3.500" /><path d="M11 10h9.500V1z" fill="#2fa83a" stroke="#126c1c" /></Svg>
            </div>
            <div className={`ml-[7px] flex h-[21px] w-[43px] items-center justify-center ${raised}`}>
              <Svg s={17}><path d="M2 2h18v18H2z" fill="#4d565e" stroke="#30363c" strokeWidth="1.500" /><path d="M6 2h10v7H6z" fill="#dfe6ec" /><path d="M6 13h10v7H6z" fill="#eee" /><path d="M8 14h3v5H8z" fill="#444" /></Svg>
            </div>
          </div>
          <div className="mt-1.5 flex flex-col">
            <Row label="File Prefix" h="h-[27px]">
              <div className={`flex h-[18px] w-[376px] items-center justify-end overflow-hidden pr-[3px] tracking-[0.12px] whitespace-nowrap ${sunken}`}>ORE/build/SCORE.1.JobID.0.Iter.115.X.0506.MS3DGrainID.raw</div>
              <div className={`ml-[5px] flex h-[18px] flex-1 items-center justify-center ${raised}`}>...</div>
            </Row>
            <Row label="File Pattern" h="h-[26px]"><Field v="%s" /></Row>
            <Row label="Data Scalar Type" h="h-[27px]" pad="pt-px"><Combo v="unsigned int" /></Row>
            <Row label="Data Byte Order" h="h-[27px]" pad="pt-px"><Combo v="LittleEndian" /></Row>
            <Row label={<>File<br />Dimensionality</>} h="h-[32px]" pad="pt-[3px]"><Combo v="3" /></Row>
            <Row label="Data Origin" h="h-[26px]"><div className="flex flex-1 gap-2"><Field v="0" /><Field v="0" /><Field v="0" /></div></Row>
            <Row label="Data Spacing" h="h-[26px]"><div className="flex flex-1 gap-2"><Field v="1" /><Field v="1" /><Field v="1" /></div></Row>
            <Row label="Data Extent" h="h-[74px]">
              <div className="grid flex-1 grid-cols-2 gap-x-1 gap-y-[6px]">
                <Field v="0" /><Field v="199" /><Field v="0" /><Field v="199" /><Field v="0" /><Field v="199" />
              </div>
            </Row>
            <Row label={<>Number Of<br />Scalar<br />Components</>} h="h-[46px]" pad="pt-[12px]"><Field v="1" /></Row>
            <Row label={<>Scalar<br />Array Name</>} h="h-[33px]" pad="pt-[5px]"><Field v="ImageFile" /></Row>
            <div className="flex items-center gap-[6px] pl-[2px] tracking-normal">
              <div className={`flex size-[17px] items-center justify-center ${raised}`}>
                <svg width="12" height="11" viewBox="0 0 12 11" fill="none"><path d="M1 5l3.500 4L11 1" stroke="#111" strokeWidth="2" /></svg>
              </div>
              File Lower Left
            </div>
          </div>
        </div>
        <div className="flex h-[398px] w-[20px] flex-col items-center pt-1 pl-px">
          <Chevron up light />
          <div className="mt-[4px] h-[356px] w-[13px] rounded-[5px] border border-[#a9a7a8] bg-[#bdbbbc]">
            <div className="-ml-px h-[158px] w-[13px] rounded-[4px] border-2 border-[#9b999a] bg-gradient-to-r from-[#f2f1f1] to-[#d4d2d3]" />
          </div>
          <div className="mt-[3px]"><Chevron up light /></div>
          <div className="mt-[8px]"><Chevron /></div>
        </div>
      </div>
    </div>
  );
}

const VIEW_TOOLS = ["undo", "redo", "3D", "zoom", "cells", "points", "frustumCells", "frustumPoints", "polyCells", "polyPoints", "blocks"];

function RenderPanel() {
  const small = `flex h-[18px] items-center justify-center tracking-normal ${raisedLight}`;
  return (
    <div className="flex w-[943px] flex-col">
      <div className="flex h-[23px] items-end">
        <div className="relative z-10 -mb-px flex h-[24px] w-[97px] items-center justify-center rounded-t-[4px] border border-b-0 border-[#c3c1c2] bg-[#e7e6e6] pr-[2px]">Layout #1</div>
        <div className="ml-[3px] flex h-[20px] w-[26px] items-center justify-center rounded-t-[4px] border border-b-0 border-[#b3b1b2] bg-[#d8d6d7] pr-px">+</div>
      </div>
      <div className="flex h-[983px] flex-col rounded-tr-[4px] rounded-b-[4px] border border-[#c0bebf] border-t-[#fdfdfd] shadow-[1px_1px_0_#f8f8f8]">
        <div className="flex h-[24px] items-center pr-[6px] pl-[3px]">
          {VIEW_TOOLS.map((k) => (
            <div key={k} className="flex w-[20px] shrink-0 items-center justify-center">
              {k === "3D" ? <span className="text-[9px] tracking-normal">3D</span> : <Sel kind={k} />}
            </div>
          ))}
          <div className="flex-1" />
          <span className="mr-3 mb-2 tracking-[0.15px]">RenderView1</span>
          <div className={`${small} w-[19px]`}><svg width="11" height="11" viewBox="0 0 11 11" fill="#dde4fa" stroke="#000"><path d="M1.500 1.500h8v8h-8zM5.500 1.500v8" /></svg></div>
          <div className={`${small} ml-[3px] w-[19px]`}><svg width="11" height="11" viewBox="0 0 11 11" fill="#dde4fa" stroke="#000"><path d="M1.500 1.500h8v8h-8zM1.500 5.500h8" /></svg></div>
          <div className={`${small} ml-[3px] w-[69px]`}>Maximize</div>
          <div className={`${small} ml-[3px] w-[49px]`}>Close</div>
        </div>
        <div className="relative h-[955px] w-[940px] border-2 border-[#0000ff] bg-[#52576e]">
          <div className="absolute top-[169px] left-[162px]"><GrainMap /></div>
          <div className="absolute top-[489px] left-[767px]"><ScalarBar /></div>
          <div className="absolute top-[759px] left-[112px]"><Axes /></div>
        </div>
      </div>
    </div>
  );
}

const OPTIONS = ["3D Glyphs", "Outline", "Points", "Slice", "Surface", "Surface With Edges", "Volume", "Wireframe"];

export default function App() {
  return (
    <div className="relative flex h-[1137px] w-[1502px] flex-col overflow-hidden bg-[radial-gradient(ellipse_620px_90px_at_1000px_0px,#ffffff_0%,rgba(255,255,255,0)_100%),linear-gradient(to_bottom,#f2f2f2_0px,#e3e1e2_170px,#d6d4d5_560px,#d6d4d5_100%)] font-['DejaVu_Sans',sans-serif] text-[12px] leading-[14px] tracking-[0.25px] text-[#161616]">
      <div className="flex h-5 shrink-0 items-center">
        <svg width="16" height="12" viewBox="0 0 16 12" className="ml-[2px] block">
          <path d="M3.500 1h3L4 11H1z" fill="#c4162c" /><path d="M7.500 1h3L8 11H5z" fill="#16843c" /><path d="M11.500 1h4L13 11H9.500z" fill="#1c5a98" />
        </svg>
        <div className="ml-[7px] flex size-[14px] items-center justify-center rounded-full border border-[#a5a5a5] bg-gradient-to-b from-white to-[#d4d4d4] shadow-[0_1px_1px_rgba(0,0,0,.3)]"><div className="size-0.5 rounded-full bg-[#444]" /></div>
        <div className="mt-px ml-[860px] text-[11px] tracking-[0.2px]">ParaView 4.2.0 64-bit</div>
      </div>
      <div className="flex h-5 shrink-0 items-center pl-2">
        {MENUS.map(([m, w]) => <div key={m} className={`${w} shrink-0`}><Mnemonic t={m} /></div>)}
      </div>
      <Toolbars />
      <div className="flex">
        <div className="flex w-[549px] flex-col">
          <PipelineBrowser />
          <div className="flex h-[5px] items-center pl-[146px]"><Grip /><div className="w-[241px]" /><Grip /></div>
          <div className="flex h-[22px] items-end border-b border-[#fbfbfb] pl-0.5">
            <div className="-mb-px flex h-[22px] w-[79px] items-center justify-center rounded-t-[4px] border border-b-0 border-[#b9b7b8] border-t-[#f6f6f6] bg-gradient-to-b from-[#e9e8e8] to-[#d6d4d5] pr-px">Properties</div>
            <div className="ml-[4px] flex h-[19px] w-[86px] items-center justify-center rounded-t-[3px] border border-b-0 border-[#a9a7a8] bg-[#cccacb] pt-px">Information</div>
          </div>
          <div className="h-[6px]" />
          <Properties />
        </div>
        <div className="flex h-[1006px] w-[6px] flex-col items-center justify-between pt-[124px] pr-px pb-[122px]"><Grip vertical /><Grip vertical /><Grip vertical /><Grip vertical /></div>
        <RenderPanel />
        <div className="flex h-[1006px] w-[4px] flex-col items-end justify-between pt-[124px] pb-[122px]"><Grip vertical /><Grip vertical /><Grip vertical /><Grip vertical /></div>
      </div>

      {/* representation menu */}
      <div className="absolute top-[95px] left-[364px] w-[149px] rounded-[3px] border-2 border-[#b7b5b6] bg-white pt-px pb-[2px] pl-px shadow-[0_3px_12px_rgba(0,0,0,.5)]">
        {OPTIONS.map((o) => (
          <div key={o} className={o === "Surface" ? "h-[14px] bg-[#009e83] pl-1 text-white" : "h-[14px] pl-1"}>{o}</div>
        ))}
      </div>

      {/* highlight ring */}
      <svg width="360" height="230" viewBox="0 0 360 230" fill="none" className="pointer-events-none absolute top-0 left-0">
        <ellipse cx="185" cy="107" rx="157.500" ry="107" stroke="#ffcb42" strokeWidth="19.500" />
      </svg>
    </div>
  );
}
